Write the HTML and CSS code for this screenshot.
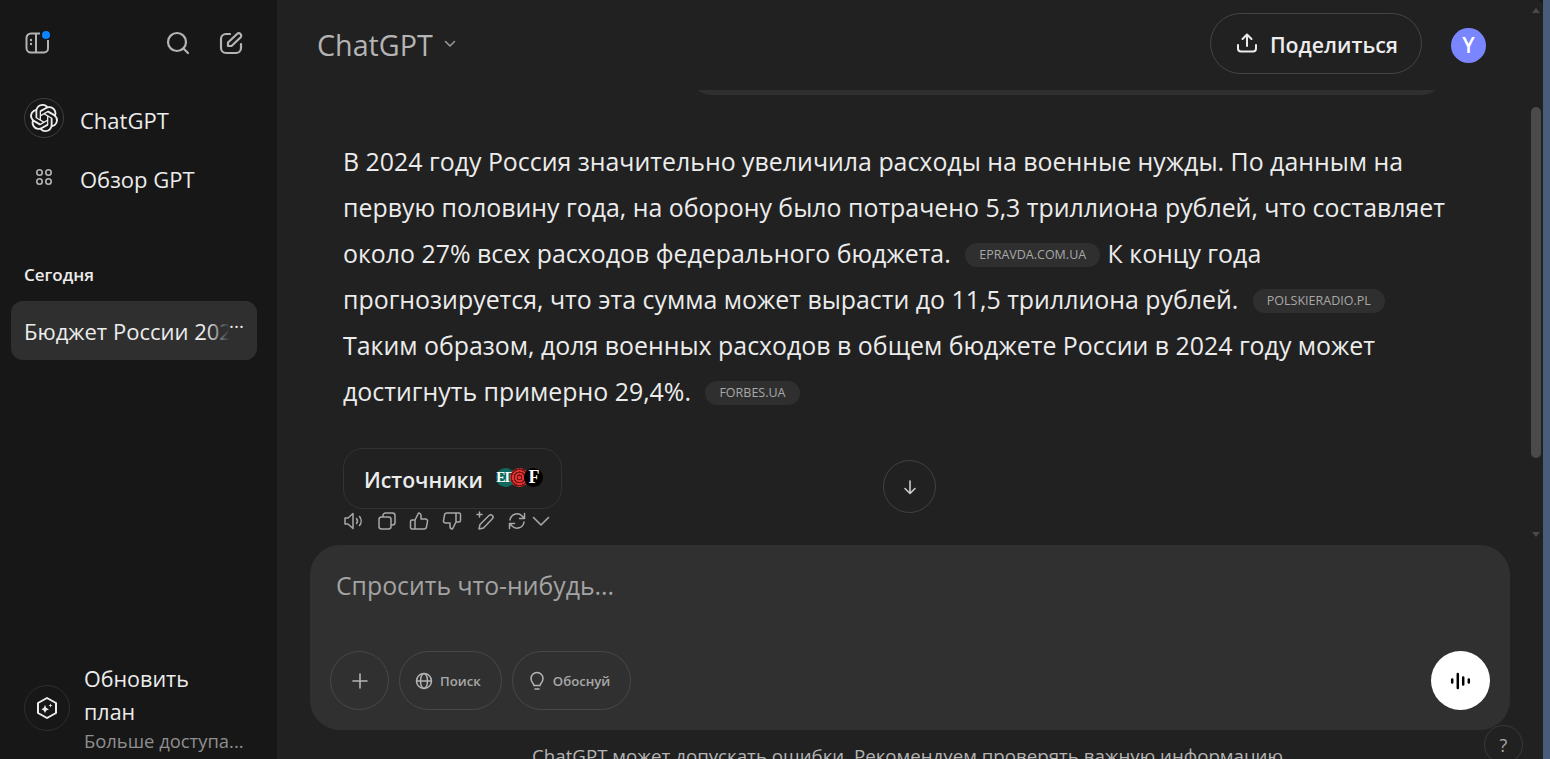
FILE: index.html
```html
<!DOCTYPE html>
<html lang="ru">

<head>
    <meta charset="UTF-8">
    <title>ChatGPT</title>
    <link rel="stylesheet" href="styles.css">
</head>

<body>
    <div class="app">
        <aside class="sidebar">
            <div class="side-top">
                <svg class="side-toggle" width="26" height="26" viewBox="0 0 26 26" fill="none" stroke="#b4b4b4" stroke-width="2">
                    <path d="M16 3.500H7A4.500 4.500 0 0 0 2.500 8v10A4.500 4.500 0 0 0 7 22.500h13a4 4 0 0 0 4-4V10M12 3.500v19" />
                    <circle cx="7" cy="10" r="1.200" fill="#b4b4b4" stroke="none" />
                    <circle cx="7" cy="14" r="1.200" fill="#b4b4b4" stroke="none" />
                    <circle cx="22" cy="5" r="4" fill="#0a84ff" stroke="none" />
                </svg>
                <div class="side-actions">
                    <svg width="26" height="26" viewBox="0 0 26 26" fill="none" stroke="#b4b4b4" stroke-width="2.200" stroke-linecap="round">
                        <circle cx="12" cy="12" r="9" />
                        <path d="M18.500 18.500L23 23" />
                    </svg>
                    <svg width="26" height="26" viewBox="0 0 26 26" fill="none" stroke="#b4b4b4" stroke-width="2.200" stroke-linecap="round" stroke-linejoin="round">
                        <path d="M12 4H8a5 5 0 0 0-5 5v9a5 5 0 0 0 5 5h10a5 5 0 0 0 5-5v-4" />
                        <path d="M10 16v-3.500L19 4a2.400 2.400 0 0 1 3.500 3.500L13.500 16z" />
                    </svg>
                </div>
            </div>

            <nav class="side-nav">
                <div class="nav-row">
                    <span class="nav-logo">
                        <svg width="28" height="28" viewBox="0 0 24 24" fill="#ececec">
                            <path d="M22.2819 9.8211a5.9847 5.9847 0 0 0-.5157-4.9108 6.0462 6.0462 0 0 0-6.5098-2.9A6.0651 6.0651 0 0 0 4.9807 4.1818a5.9847 5.9847 0 0 0-3.9977 2.9 6.0462 6.0462 0 0 0 .7427 7.0966 5.98 5.98 0 0 0 .511 4.9107 6.051 6.051 0 0 0 6.5146 2.9001A5.9847 5.9847 0 0 0 13.2599 24a6.0557 6.0557 0 0 0 5.7718-4.2058 5.9894 5.9894 0 0 0 3.9977-2.9001 6.0557 6.0557 0 0 0-.7475-7.0729zm-9.022 12.6081a4.4755 4.4755 0 0 1-2.8764-1.0408l.1419-.0804 4.7783-2.7582a.7948.7948 0 0 0 .3927-.6813v-6.7369l2.02 1.1686a.071.071 0 0 1 .038.052v5.5826a4.504 4.504 0 0 1-4.4945 4.4944zm-9.6607-4.1254a4.4708 4.4708 0 0 1-.5346-3.0137l.142.0852 4.783 2.7582a.7712.7712 0 0 0 .7806 0l5.8428-3.3685v2.3324a.0804.0804 0 0 1-.0332.0615L9.74 19.9502a4.4992 4.4992 0 0 1-6.1408-1.6464zM2.3408 7.8956a4.485 4.485 0 0 1 2.3655-1.9728V11.6a.7664.7664 0 0 0 .3879.6765l5.8144 3.3543-2.0201 1.1685a.0757.0757 0 0 1-.071 0l-4.8303-2.7865A4.504 4.504 0 0 1 2.3408 7.872zm16.5963 3.8558L13.1038 8.364 15.1192 7.2a.0757.0757 0 0 1 .071 0l4.8303 2.7913a4.4944 4.4944 0 0 1-.6765 8.1042v-5.6772a.79.79 0 0 0-.407-.667zm2.0107-3.0231l-.142-.0852-4.7735-2.7818a.7759.7759 0 0 0-.7854 0L9.409 9.2297V6.8974a.0662.0662 0 0 1 .0284-.0615l4.8303-2.7866a4.4992 4.4992 0 0 1 6.6802 4.66zM8.3065 12.863l-2.02-1.1638a.0804.0804 0 0 1-.038-.0567V6.0742a4.4992 4.4992 0 0 1 7.3757-3.4537l-.142.0805L8.704 5.459a.7948.7948 0 0 0-.3927.6813zm1.0976-2.3654l2.602-1.4998 2.6069 1.4998v2.9994l-2.5974 1.4997-2.6067-1.4997Z" />
                        </svg>
                    </span>
                    <span>ChatGPT</span>
                </div>
                <div class="nav-row">
                    <span class="nav-logo plain">
                        <svg width="20" height="20" viewBox="0 0 20 20" fill="none" stroke="#b4b4b4" stroke-width="1.600">
                            <circle cx="5.500" cy="5.500" r="2.700" />
                            <circle cx="14.500" cy="5.500" r="2.700" />
                            <circle cx="5.500" cy="14.500" r="2.700" />
                            <circle cx="14.500" cy="14.500" r="2.700" />
                        </svg>
                    </span>
                    <span>Обзор GPT</span>
                </div>
            </nav>

            <h3 class="side-title">Сегодня</h3>
            <div class="chat-item">
                <span class="chat-name">Бюджет России 2024</span>
                <span class="chat-dots">···</span>
            </div>

            <div class="upgrade">
                <span class="upgrade-icon">
                    <svg width="26" height="26" viewBox="0 0 26 26" fill="none" stroke="#ececec" stroke-width="2" stroke-linejoin="round">
                        <path d="M13 3l9 5v10l-9 5-9-5V8z" />
                        <path d="M11 10l1.300 3 2.700 1.200-2.700 1.200L11 18l-1.300-2.600L7.500 14.200l2.200-1.200zM16.500 8.500l.6 1.400 1.400.6-1.400.6-.6 1.400-.6-1.400-1.400-.6 1.400-.6z" fill="#ececec" stroke="none" />
                    </svg>
                </span>
                <div class="upgrade-text">
                    <div class="upgrade-main">Обновить<br>план</div>
                    <div class="upgrade-sub">Больше доступа...</div>
                </div>
            </div>
        </aside>

        <main class="main">
            <header class="topbar">
                <div class="model">
                    <span>ChatGPT</span>
                    <svg width="14" height="14" viewBox="0 0 14 14" fill="none" stroke="#9b9b9b" stroke-width="1.500" stroke-linecap="round" stroke-linejoin="round">
                        <path d="M2.500 4.500L7 9l4.500-4.500" />
                    </svg>
                </div>
                <div class="top-right">
                    <button class="share">
                        <svg width="24" height="24" viewBox="0 0 24 24" fill="none" stroke="#ececec" stroke-width="2" stroke-linecap="round" stroke-linejoin="round">
                            <path d="M12 15V4M7.500 8L12 3.500 16.500 8M3 14v3.500A3 3 0 0 0 6 20.500h12a3 3 0 0 0 3-3V14" />
                        </svg>
                        <span>Поделиться</span>
                    </button>
                    <span class="avatar">Y</span>
                </div>
            </header>

            <section class="chat">
                <div class="user-edge"></div>
                <div class="answer">
                    <p>В 2024 году Россия значительно увеличила расходы на военные нужды. По данным на первую половину года, на оборону было потрачено 5,3 триллиона рублей, что составляет около 27% всех расходов федерального бюджета. <span class="cite">EPRAVDA.COM.UA</span> К концу года прогнозируется, что эта сумма может вырасти до 11,5 триллиона рублей. <span class="cite">POLSKIERADIO.PL</span> Таким образом, доля военных расходов в общем бюджете России в 2024 году может достигнуть примерно 29,4%. <span class="cite">FORBES.UA</span></p>
                    <button class="sources">
                        <span>Источники</span>
                        <span class="favs">
                            <span class="fav fav-ep">ЕП</span>
                            <span class="fav fav-pr"></span>
                            <span class="fav fav-f">F</span>
                        </span>
                    </button>
                    <div class="msg-actions">
                        <svg width="22" height="22" viewBox="0 0 22 22" fill="none" stroke="#a8a8a8" stroke-width="1.500" stroke-linejoin="round" stroke-linecap="round">
                            <path d="M2 8v6h3l5 4.500v-15L5 8zM13.500 8.500a4 4 0 0 1 0 5M16.500 6.500a7 7 0 0 1 0 9" />
                        </svg>
                        <svg width="22" height="22" viewBox="0 0 22 22" fill="none" stroke="#a8a8a8" stroke-width="1.500" stroke-linejoin="round">
                            <rect x="3" y="7" width="12" height="12" rx="2.500" />
                            <path d="M7 7V5.500A2.500 2.500 0 0 1 9.500 3h7A2.500 2.500 0 0 1 19 5.500v7a2.500 2.500 0 0 1-2.500 2.500H15" />
                        </svg>
                        <svg width="22" height="22" viewBox="0 0 22 22" fill="none" stroke="#a8a8a8" stroke-width="1.500" stroke-linejoin="round">
                            <path d="M7 10l3.500-7a2.500 2.500 0 0 1 2.500 2.500V9h4.500a2 2 0 0 1 2 2.400l-1 5.500a2.500 2.500 0 0 1-2.500 2.100H7zM7 10H4a1.500 1.500 0 0 0-1.500 1.500v6A1.500 1.500 0 0 0 4 19h3" />
                        </svg>
                        <svg width="22" height="22" viewBox="0 0 22 22" fill="none" stroke="#a8a8a8" stroke-width="1.500" stroke-linejoin="round">
                            <path d="M15 12l-3.500 7A2.500 2.500 0 0 1 9 16.500V13H4.500a2 2 0 0 1-2-2.400l1-5.500A2.500 2.500 0 0 1 6 3h9zM15 12h3a1.500 1.500 0 0 0 1.500-1.500v-6A1.500 1.500 0 0 0 18 3h-3" />
                        </svg>
                        <svg width="22" height="22" viewBox="0 0 22 22" fill="none" stroke="#a8a8a8" stroke-width="1.500" stroke-linejoin="round" stroke-linecap="round">
                            <path d="M5 19l1-4.500L15 5.500a2.300 2.300 0 0 1 3.300 3.300L9.500 18z" />
                            <path d="M5.500 2v5M3 4.500h5" />
                        </svg>
                        <svg width="22" height="22" viewBox="0 0 22 22" fill="none" stroke="#a8a8a8" stroke-width="1.500" stroke-linejoin="round" stroke-linecap="round">
                            <path d="M4 10a7 7 0 0 1 12-4l2.500 2.500M18.500 3.500v5h-5M18 12a7 7 0 0 1-12 4l-2.500-2.500M3.500 18.500v-5h5" />
                        </svg>
                        <svg class="more" width="22" height="22" viewBox="0 0 22 22" fill="none" stroke="#a8a8a8" stroke-width="1.600" stroke-linecap="round" stroke-linejoin="round">
                            <path d="M3.500 7.500L11 15l7.500-7.500" />
                        </svg>
                    </div>
                </div>
                <button class="to-bottom">
                    <svg width="18" height="18" viewBox="0 0 18 18" fill="none" stroke="#cdcdcd" stroke-width="1.600" stroke-linecap="round" stroke-linejoin="round">
                        <path d="M9 3v12M4 10.500L9 15.500l5-5" />
                    </svg>
                </button>
                <div class="scroll">
                    <span class="thumb"></span>
                    <span class="arrow down"></span>
                </div>
            </section>

            <section class="composer">
                <div class="prompt">Спросить что-нибудь...</div>
                <div class="composer-row">
                    <button class="tool round">
                        <svg width="20" height="20" viewBox="0 0 20 20" fill="none" stroke="#b4b4b4" stroke-width="1.600" stroke-linecap="round">
                            <path d="M10 3v14M3 10h14" />
                        </svg>
                    </button>
                    <button class="tool">
                        <svg width="20" height="20" viewBox="0 0 20 20" fill="none" stroke="#b4b4b4" stroke-width="1.500">
                            <circle cx="10" cy="10" r="7.500" />
                            <ellipse cx="10" cy="10" rx="3.500" ry="7.500" />
                            <path d="M2.500 10h15" />
                        </svg>
                        <span>Поиск</span>
                    </button>
                    <button class="tool">
                        <svg width="20" height="20" viewBox="0 0 20 20" fill="none" stroke="#b4b4b4" stroke-width="1.500" stroke-linecap="round">
                            <path d="M7 14.500c0-2-3-3-3-7a6 6 0 0 1 12 0c0 4-3 5-3 7zM8 18h4" />
                        </svg>
                        <span>Обоснуй</span>
                    </button>
                    <button class="voice">
                        <svg width="24" height="24" viewBox="0 0 24 24" fill="none" stroke="#000" stroke-width="2.500" stroke-linecap="round">
                            <path d="M3.200 10.500v3M8.800 5v14M14.200 8.500v7M19.800 10.500v3" />
                        </svg>
                    </button>
                </div>
            </section>

            <footer class="disclaimer">ChatGPT может допускать ошибки. Рекомендуем проверять важную информацию.</footer>
            <button class="help">?</button>
            <span class="arrow up"></span>
        </main>
        <div class="edge"></div>
    </div>
</body>

</html>
```
FILE: styles.css
```css
* {
    box-sizing: border-box;
}

body {
    margin: 0;
    height: 759px;
    overflow: hidden;
    background-color: #212121;
    color: #ececec;
    font-family: "Open Sans", "Noto Sans", sans-serif;
}

button {
    font-family: inherit;
    background: none;
    color: inherit;
    cursor: pointer;
}

svg {
    display: block;
    flex-shrink: 0;
}

.app {
    display: flex;
    height: 759px;
    background-color: #171717;
}

/* sidebar */
.sidebar {
    width: 277px;
    flex-shrink: 0;
    background-color: #171717;
    display: flex;
    flex-direction: column;
    padding: 0 20px 0 11px;
}

.side-top {
    display: flex;
    justify-content: space-between;
    height: 90px;
    padding: 30px 13px 0 13px;
}

.side-actions {
    display: flex;
    gap: 27px;
}

.nav-row {
    display: flex;
    align-items: center;
    gap: 16px;
    height: 59px;
    padding-left: 13px;
    font-size: 22px;
}

.nav-logo {
    width: 40px;
    height: 40px;
    margin-bottom: 3px;
    border-radius: 50%;
    border: 1px solid #3e3e3e;
    display: flex;
    align-items: center;
    justify-content: center;
}

.nav-logo.plain {
    border: 0;
}

.side-title {
    margin: 55px 0 0;
    padding-left: 13px;
    font-size: 17px;
    font-weight: 600;
    line-height: 24px;
}

.chat-item {
    margin-top: 14px;
    height: 59px;
    border-radius: 12px;
    background-color: #2f2f2f;
    display: flex;
    align-items: center;
    padding: 0 13px;
    font-size: 22px;
    position: relative;
    overflow: hidden;
}

.chat-name {
    white-space: nowrap;
}

.chat-dots {
    position: absolute;
    right: 0;
    top: 0;
    bottom: 0;
    width: 50px;
    padding: 15px 13px 0 0;
    text-align: right;
    font-size: 19px;
    line-height: 20px;
    background: linear-gradient(to right, rgba(47, 47, 47, 0), #2f2f2f 45%);
}

.upgrade {
    margin-top: auto;
    display: flex;
    align-items: center;
    gap: 14px;
    padding: 0 0 5px 13px;
}

.upgrade-icon {
    width: 46px;
    height: 46px;
    border-radius: 50%;
    border: 1px solid #2e2e2e;
    display: flex;
    align-items: center;
    justify-content: center;
}

.upgrade-main {
    font-size: 21.500px;
    line-height: 33px;
}

.upgrade-sub {
    font-size: 18.400px;
    line-height: 26px;
    color: #8f8f8f;
    white-space: nowrap;
}

/* main column */
.main {
    flex: 1;
    display: flex;
    flex-direction: column;
    position: relative;
    min-width: 0;
    background-color: #212121;
    border-top-right-radius: 6px;
}

.topbar {
    height: 90px;
    flex-shrink: 0;
    display: flex;
    align-items: center;
    justify-content: space-between;
    padding: 0 57px 0 40px;
}

.model {
    display: flex;
    align-items: center;
    gap: 10px;
    margin-bottom: 2px;
    font-size: 28.700px;
    font-weight: 500;
    color: #b4b4b4;
}

.top-right {
    display: flex;
    align-items: center;
    gap: 29px;
}

.share {
    display: flex;
    align-items: center;
    gap: 11px;
    height: 61px;
    margin-bottom: 4px;
    padding: 2px 23px 0 24px;
    border: 1px solid #444;
    border-radius: 31px;
    font-size: 21.300px;
    font-weight: 600;
}

.share svg {
    margin-top: -3px;
}

.avatar {
    width: 35px;
    height: 35px;
    border-radius: 50%;
    background-color: #7a86ff;
    color: #fff;
    font-size: 21px;
    font-weight: 600;
    display: flex;
    align-items: center;
    justify-content: center;
}

.chat {
    height: 455px;
    flex-shrink: 0;
    position: relative;
    overflow: hidden;
}

.user-edge {
    position: absolute;
    left: 412px;
    top: -40px;
    width: 755px;
    height: 45px;
    border-radius: 30px;
    background-color: #2f2f2f;
}

.answer {
    padding: 48px 95px 0 66px;
}

.answer p {
    margin: 0;
    font-size: 24.900px;
    line-height: 46px;
}

.cite {
    display: inline-block;
    height: 24px;
    line-height: 24px;
    padding: 0 14px;
    margin: 0 1px 0 8px;
    border-radius: 12px;
    background-color: #2f2f2f;
    color: #a8a8a8;
    font-size: 12.500px;
    vertical-align: 4px;
}

.sources {
    display: flex;
    align-items: center;
    gap: 13px;
    width: 219px;
    height: 61px;
    margin-top: 34px;
    padding: 2px 20px 0;
    border: 1px solid #333;
    border-radius: 20px;
    font-size: 21.200px;
    font-weight: 600;
}

.favs {
    display: flex;
    margin-bottom: 4px;
}

.fav {
    width: 19px;
    height: 19px;
    border-radius: 50%;
    display: flex;
    align-items: center;
    justify-content: center;
    font-family: "Liberation Serif", serif;
    font-size: 14px;
    letter-spacing: -1px;
    color: #fff;
    margin-right: -5px;
}

.fav-ep {
    background-color: #0f6a5d;
}

.fav-pr {
    background: repeating-radial-gradient(circle, #d33 0 1.500px, #7a1414 1.500px 3px);
}

.fav-f {
    background-color: #000;
    font-size: 18px;
    font-weight: 700;
}

.msg-actions {
    display: flex;
    gap: 10.700px;
    margin-top: 1px;
}

.msg-actions .more {
    margin-left: -9px;
}

.to-bottom {
    position: absolute;
    left: 606px;
    top: 370px;
    width: 53px;
    height: 53px;
    border-radius: 50%;
    border: 1px solid #424242;
    background-color: #212121;
    display: flex;
    align-items: center;
    justify-content: center;
}

.scroll {
    position: absolute;
    right: 1px;
    top: 0;
    bottom: 0;
    width: 12px;
}

.thumb {
    position: absolute;
    top: 17px;
    left: 1px;
    width: 10px;
    height: 351px;
    border-radius: 5px;
    background-color: #4a4a4a;
}

.arrow {
    position: absolute;
    border-left: 4px solid transparent;
    border-right: 4px solid transparent;
}

.arrow.up {
    top: 8px;
    right: 3px;
    border-bottom: 5px solid #4a4a4a;
}

.arrow.down {
    left: 2px;
    bottom: 8px;
    border-top: 5px solid #4a4a4a;
}

/* composer */
.composer {
    margin: 0 33px;
    height: 185px;
    flex-shrink: 0;
    border-radius: 30px;
    background-color: #303030;
    display: flex;
    flex-direction: column;
    justify-content: space-between;
    padding: 24px 20px 20px;
}

.prompt {
    padding-left: 6px;
    font-size: 24.800px;
    line-height: 32px;
    color: #a3a3a3;
}

.composer-row {
    display: flex;
    align-items: center;
    gap: 10px;
}

.tool {
    display: flex;
    align-items: center;
    gap: 6px;
    height: 59px;
    padding: 0 20px 0 14px;
    border: 1px solid #484848;
    border-radius: 30px;
    font-size: 13.200px;
    font-weight: 600;
    color: #a8a8a8;
}

.tool.round {
    width: 59px;
    padding: 0;
    justify-content: center;
}

.voice {
    margin-left: auto;
    width: 59px;
    height: 59px;
    border: 0;
    border-radius: 50%;
    background-color: #fff;
    display: flex;
    align-items: center;
    justify-content: center;
}

.disclaimer {
    margin-top: 13px;
    text-align: center;
    font-size: 18.700px;
    line-height: 26px;
    color: #b4b4b4;
    white-space: nowrap;
}

.help {
    position: absolute;
    right: 20px;
    bottom: -5px;
    width: 39px;
    height: 39px;
    border: 1px solid #3a3a3a;
    border-radius: 50%;
    font-size: 18px;
    color: #a8a8a8;
    padding: 0;
}

.edge {
    width: 7px;
    flex-shrink: 0;
    background-color: #4a5d78;
}
```
